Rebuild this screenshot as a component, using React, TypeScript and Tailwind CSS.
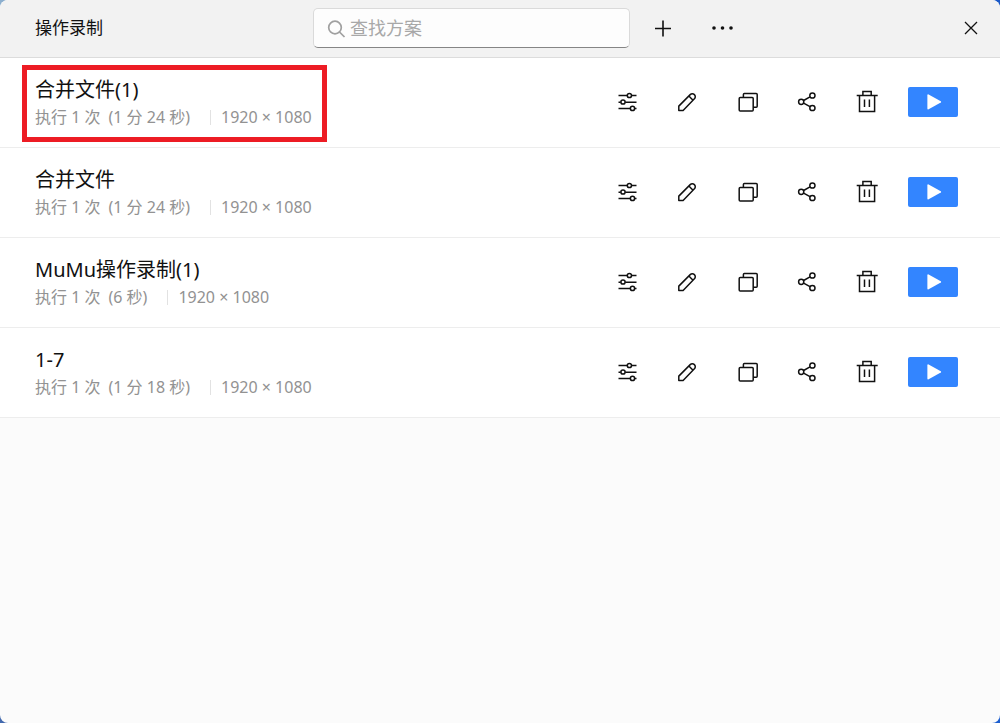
import React, { useState } from 'react';

interface Recording {
  id: number;
  name: string;
  runs: string;
  duration: string;
  resolution: string;
  highlighted?: boolean;
}

const recordings: Recording[] = [
  { id: 1, name: '合并文件(1)', runs: '执行 1 次', duration: '(1 分 24 秒)', resolution: '1920 × 1080', highlighted: true },
  { id: 2, name: '合并文件', runs: '执行 1 次', duration: '(1 分 24 秒)', resolution: '1920 × 1080' },
  { id: 3, name: 'MuMu操作录制(1)', runs: '执行 1 次', duration: '(6 秒)', resolution: '1920 × 1080' },
  { id: 4, name: '1-7', runs: '执行 1 次', duration: '(1 分 18 秒)', resolution: '1920 × 1080' },
];

const Icon: React.FC<{ children: React.ReactNode }> = ({ children }) => (
  <svg width="24" height="24" viewBox="0 0 24 24" fill="none" stroke="currentColor" strokeWidth="1.5" aria-hidden="true">
    {children}
  </svg>
);

const SettingsIcon = () => (
  <Icon>
    <path d="M3.5 5.5h8.7M16.6 5.5h4.9M3.5 12.2h2.2M10.2 12.2h11.3M3.5 18.5h11.8M19.7 18.5h1.8" />
    <circle cx="14.4" cy="5.5" r="2.1" />
    <circle cx="8" cy="12" r="2.1" />
    <circle cx="17.5" cy="18.4" r="2.1" />
  </Icon>
);

const EditIcon = () => (
  <Icon>
    <path d="M3.8 20.5v-4.4L15.2 4.6a2.9 2.9 0 0 1 4.2 4.2L8.1 20.5z" strokeLinejoin="round" />
    <path d="M13.9 6l4.1 4.2" />
  </Icon>
);

const CopyIcon = () => (
  <Icon>
    <rect x="4.2" y="7.5" width="14" height="13.5" rx="1" />
    <path d="M8.4 7.5V4.4a1 1 0 0 1 1-1h11.8a1 1 0 0 1 1 1v11.9a1 1 0 0 1-1 1h-3" />
  </Icon>
);

const ShareIcon = () => (
  <Icon>
    <circle cx="6.2" cy="11.8" r="2.6" />
    <circle cx="17.4" cy="5.5" r="2.6" />
    <circle cx="17.4" cy="18" r="2.6" />
    <path d="M8.6 10.5L15 6.9M8.6 13.1L15 16.7" />
  </Icon>
);

const TrashIcon = () => (
  <Icon>
    <path d="M1.7 5.5h21M7.9 5.5V1.5h8.3v4M4.5 5.5v16h15.1v-16M9.5 9.5v7.5M14.4 9.5v7.5" />
  </Icon>
);

const actions = [
  { label: '设置', icon: <SettingsIcon /> },
  { label: '编辑', icon: <EditIcon /> },
  { label: '复制', icon: <CopyIcon /> },
  { label: '分享', icon: <ShareIcon /> },
  { label: '删除', icon: <TrashIcon /> },
];

const RecordingRow: React.FC<{ item: Recording }> = ({ item }) => (
  <li className="relative flex items-center justify-between border-b border-[#ededed] bg-white pt-[17px] pr-[42px] pb-[18px] pl-[35px]">
    {item.highlighted && (
      <div className="pointer-events-none absolute top-[7px] left-[22px] h-[77px] w-[305px] border-5 border-[#ed1c24]" />
    )}
    <div>
      <h2 className="text-[20px] leading-[30px] text-[#111]">{item.name}</h2>
      <div className="flex items-center text-[16px] leading-[24px] text-[#929292]">
        <span className="mr-2">{item.runs}</span>
        <span>{item.duration}</span>
        <span className="mr-[10px] ml-5 h-[15px] w-px bg-[#e2e2e2]" />
        <span>{item.resolution}</span>
      </div>
    </div>
    <div className="flex items-center">
      <div className="mr-[29px] flex gap-9">
        {actions.map(action => (
          <button key={action.label} type="button" aria-label={action.label} className="text-[#111] hover:text-[#3385ff]">
            {action.icon}
          </button>
        ))}
      </div>
      <button type="button" aria-label="执行" className="flex h-[30px] w-[50px] items-center justify-center rounded-xs bg-[#3385ff] text-white">
        <svg width="24" height="24" viewBox="0 0 24 24" fill="currentColor" aria-hidden="true">
          <path d="M6.4 5.2Q6.4 3.8 7.6 4.4L19.8 11.3Q20.6 12 19.8 12.5L7.6 19.3Q6.4 19.9 6.4 18.6z" />
        </svg>
      </button>
    </div>
  </li>
);

const App: React.FC = () => {
  const [query, setQuery] = useState('');
  const visible = recordings.filter(item => item.name.includes(query));

  return (
    <div className="min-h-screen bg-[linear-gradient(100deg,#8db0cf,#0a3494_20%,#1d5fd0)] font-['Noto_Sans','Noto_Sans_CJK_SC',sans-serif]">
      <main className="min-h-screen overflow-hidden rounded-lg bg-[#fbfbfb]">
        <header className="flex items-center border-b border-[#dcdcdc] bg-[#f2f2f2] pt-2 pr-[17px] pb-[9px] pl-[35px]">
          <h1 className="w-[278px] shrink-0 text-[17px] leading-[24px] text-[#111]">操作录制</h1>
          <label className="flex h-10 w-[317px] items-center rounded-[5px] border border-[#dadada] border-b-[#858585] bg-[#fdfdfd] pl-[13px]">
            <svg width="19" height="20" viewBox="0 0 19 20" fill="none" stroke="#a0a0a0" strokeWidth="1.7" aria-hidden="true">
              <circle cx="8" cy="9.5" r="6.3" />
              <path d="M12.5 14l5 5" />
            </svg>
            <input
              type="text"
              aria-label="查找方案"
              placeholder="查找方案"
              value={query}
              onChange={e => setQuery(e.target.value)}
              className="ml-1 min-w-0 flex-1 bg-transparent text-[18px] leading-[24px] text-[#111] outline-none placeholder:text-[#a8a8a8]"
            />
          </label>
          <div className="ml-[21px] flex gap-9 text-[#111]">
            <button type="button" aria-label="新建">
              <Icon>
                <path d="M4 12.5h16M12 4.5v16" strokeWidth="1.6" />
              </Icon>
            </button>
            <button type="button" aria-label="更多">
              <Icon>
                <g fill="currentColor" stroke="none">
                  <circle cx="3" cy="12" r="1.8" />
                  <circle cx="11.5" cy="12" r="1.8" />
                  <circle cx="20" cy="12" r="1.8" />
                </g>
              </Icon>
            </button>
          </div>
          <button type="button" aria-label="关闭" className="ml-auto text-[#111]">
            <Icon>
              <path d="M6 6l12 12M18 6L6 18" strokeWidth="1.3" />
            </Icon>
          </button>
        </header>
        <ul>
          {visible.map(item => (
            <RecordingRow key={item.id} item={item} />
          ))}
        </ul>
      </main>
    </div>
  );
};

export default App;
